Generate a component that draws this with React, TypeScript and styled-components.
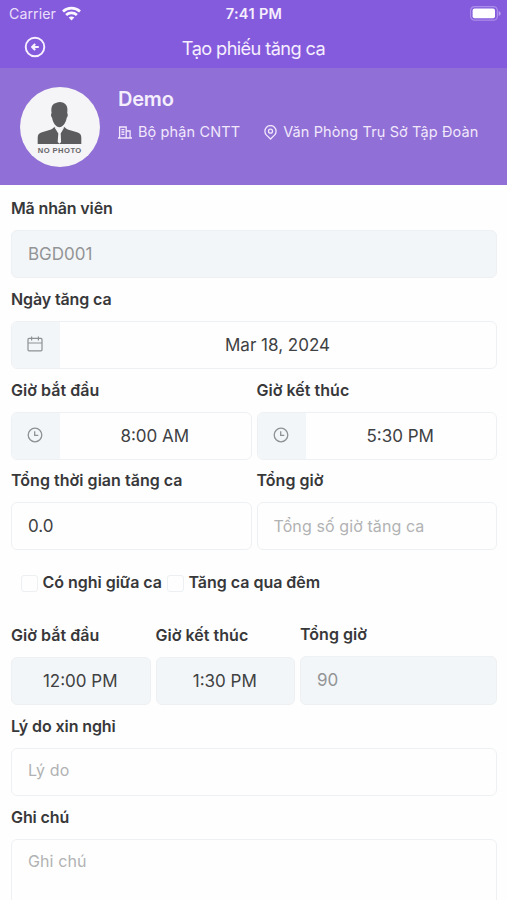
import React from "react";
import styled, { createGlobalStyle } from "styled-components";

const GlobalStyle = createGlobalStyle`
  * { box-sizing: border-box; }
  body {
    margin: 0;
    background: #fefefe;
    font-family: Inter, "Liberation Sans", sans-serif;
    color: #38383a;
  }
`;

const Screen = styled.div`
  width: 100%;
  height: 900px;
  overflow: hidden;
  display: flex;
  flex-direction: column;
`;

const Header = styled.header`
  height: 68px;
  flex: none;
  background: #855bdd;
  color: #f6effe;
`;

const StatusBar = styled.div`
  height: 27px;
  padding: 0 6px 0 9px;
  display: grid;
  grid-template-columns: 1fr auto 1fr;
  align-items: center;
  svg { display: block; }
`;

const Carrier = styled.div`
  display: flex;
  align-items: center;
  gap: 6px;
  font-size: 14.2px;
  line-height: 20px;
  letter-spacing: 0.05px;
  color: #eadffa;
`;

const Clock = styled.div`
  font-size: 14.5px;
  font-weight: 600;
  letter-spacing: 0.35px;
  margin-right: 2px;
`;

const BatterySlot = styled.div`
  display: flex;
  justify-content: flex-end;
`;

const NavBar = styled.div`
  height: 40px;
  padding: 0 24px;
  display: grid;
  grid-template-columns: 24px 1fr 24px;
  align-items: center;
  svg { display: block; }
`;

const Title = styled.h1`
  margin: 1px 0 0 0;
  font-size: 18.2px;
  font-weight: 400;
  letter-spacing: -0.6px;
  text-align: center;
  white-space: nowrap;
`;

const Profile = styled.section`
  height: 117px;
  flex: none;
  background: #906fd6;
  color: #f5effd;
  display: flex;
  padding: 19px 0 0 20px;
`;

const ProfileInfo = styled.div`
  padding-left: 18px;
`;

const Name = styled.div`
  font-size: 20px;
  line-height: 24px;
  font-weight: 600;
  letter-spacing: -0.2px;
`;

const MetaList = styled.div`
  margin-top: 11px;
  display: flex;
  gap: 24px;
`;

const Meta = styled.div`
  display: flex;
  align-items: center;
  gap: 6px;
  font-size: 14.5px;
  line-height: 20px;
  letter-spacing: 0.12px;
  white-space: nowrap;
  color: #f1e8fc;
`;

const Form = styled.main`
  flex: 1;
  min-height: 0;
  padding: 13px 10px 0 11px;
`;

const Row = styled.div<{ $columns?: string; $before?: number }>`
  display: grid;
  grid-template-columns: ${(p) => p.$columns ?? "1fr"};
  gap: 5px;
  align-items: end;
  margin-top: ${(p) => p.$before ?? 0}px;
`;

const Label = styled.div<{ $spacing?: number }>`
  height: 20px;
  line-height: 20px;
  margin-bottom: 12px;
  font-size: 16px;
  font-weight: 600;
  letter-spacing: ${(p) => p.$spacing ?? 0.03}px;
  white-space: nowrap;
`;

const Box = styled.div<{ $height?: number; $filled?: boolean }>`
  height: ${(p) => p.$height ?? 48}px;
  display: flex;
  overflow: hidden;
  border: 1px solid #eef1f3;
  border-radius: 6px;
  background: ${(p) => (p.$filled ? "#f3f6f8" : "#fefefe")};
`;

const Addon = styled.div`
  width: 48px;
  flex: none;
  display: flex;
  align-items: center;
  justify-content: center;
  padding: 0 2px 2px 0;
  background: #f3f6f8;
  color: #8e9193;
`;

const Value = styled.div<{ $center?: boolean; $tone?: "muted" | "hint"; $lift?: number }>`
  flex: 1;
  height: 46px;
  line-height: ${(p) => 47 - 2 * (p.$lift ?? 0)}px;
  padding: ${(p) => (p.$center ? "0 1px 0 0" : "0 16px")};
  text-align: ${(p) => (p.$center ? "center" : "left")};
  font-size: ${(p) => (p.$tone === "hint" ? 16 : 17)}px;
  letter-spacing: ${(p) => (p.$tone === "hint" ? 0.1 : 0)}px;
  color: ${(p) => (p.$tone === "hint" ? "#b1b2b3" : p.$tone === "muted" ? "#929496" : "#404143")};
  white-space: nowrap;
`;

const Checks = styled.div`
  display: flex;
  align-items: center;
  height: 20px;
  margin: 22px 0 0 10px;
`;

const Check = styled.div`
  display: flex;
  align-items: center;
  gap: 4.5px;
  margin-right: 5px;
  font-size: 16px;
  font-weight: 600;
  letter-spacing: -0.02px;
  white-space: nowrap;
`;

const Tick = styled.span`
  width: 17px;
  height: 17px;
  margin-top: 2px;
  border: 1px solid #edf0f2;
  border-radius: 3px;
`;

const WifiIcon = () => (
  <svg width="19" height="15" viewBox="0 0 19 15" fill="none" stroke="#fbf7ff" strokeWidth="2.7">
    <path d="M1 5.400C5.700.9 13.300.9 18 5.400" />
    <path d="M4.100 8.900c3-2.800 7.800-2.800 10.800 0" />
    <path d="M9.500 14.400 6.700 11.600c1.500-1.400 4.100-1.400 5.600 0z" fill="#fbf7ff" stroke="none" />
  </svg>
);

const BatteryIcon = () => (
  <svg width="31" height="15" viewBox="0 0 31 15">
    <rect x=".6" y=".6" width="26.8" height="13.600" rx="4" fill="none" stroke="#ab8ee9" strokeWidth="1.200" />
    <rect x="2.600" y="2.600" width="22.400" height="9.600" rx="2" fill="#fff" />
    <path d="M28.700 5v5c1.200-.5 2-1.400 2-2.500S29.900 5.500 28.700 5z" fill="#b79ded" />
  </svg>
);

const BackIcon = () => (
  <svg width="22" height="22" viewBox="0 0 22 22" fill="none" stroke="#f8f1ff" strokeWidth="1.900">
    <circle cx="11" cy="11" r="9.300" />
    <path d="M8.500 11h6.300M11.200 7.900 8.100 11l3.100 3.100" strokeWidth="2.100" strokeLinejoin="round" />
  </svg>
);

const Avatar = () => (
  <svg width="80" height="80" viewBox="0 0 80 80">
    <circle cx="40" cy="40" r="40" fill="#f5f4f6" />
    <g fill="#5c5b5d">
      <path d="M31.600 26c-1-6 1-9.500 5-10.200 2.500-1.800 7.600-.8 9.500 2.200 1.600 2.400 1.500 5.200 1.100 8 .9.700.8 3.700-.5 4.800-.8 5.400-4 9.400-7.300 9.400s-6.500-4-7.300-9.400c-1.300-1.100-1.400-4.100-.5-4.800z" />
      <path d="M17.700 57v-6.500c0-3 1.600-4.400 4.300-5.200l8.300-2.600c1.800-.6 3.200-1.500 4-2.900L39.400 45l5.100-5.200c.8 1.400 2.200 2.300 4 2.900l8.500 2.600c2.700.8 4.300 2.200 4.300 5.200V57z" />
    </g>
    <path d="m34.300 40 5.100 3.200 5.100-3.200-3.800 6.600.4 8.400-1.600 1.800-1.800-1.800.6-8.400z" fill="#f5f4f6" />
    <text x="39.500" y="65.500" textAnchor="middle" textLength="43.500" fontSize="7.600" fontWeight="700" fontFamily="Liberation Sans, Arial, sans-serif" fill="#68676a">NO PHOTO</text>
  </svg>
);

const BuildingIcon = () => (
  <svg width="14" height="13" viewBox="0 0 14 13" fill="none" stroke="currentColor" strokeWidth="1.300">
    <path d="M0 12h14M1.600 12V1h6.600v11M8.200 5h3.900v7M3.400 3.600h3M3.400 6h3M3.400 8.400h3" />
  </svg>
);

const PinIcon = () => (
  <svg width="13" height="15" viewBox="0 0 13 15" fill="none" stroke="currentColor" strokeWidth="1.300">
    <path d="M6.500 14 2.500 10.100a5.600 5.600 0 1 1 8 0z" />
    <circle cx="6.500" cy="6.200" r="2" />
  </svg>
);

const CalendarIcon = () => (
  <svg width="16" height="16" viewBox="0 0 16 16" fill="none" stroke="currentColor" strokeWidth="1.200">
    <rect x="1" y="2.400" width="14" height="12.400" rx="1" />
    <path d="M1 7h14M4.600.5v4M11.400.5v4" />
  </svg>
);

const ClockIcon = () => (
  <svg width="16" height="16" viewBox="0 0 16 16" fill="none" stroke="currentColor" strokeWidth="1.300">
    <circle cx="8" cy="8" r="6.800" />
    <path d="M7.700 4.200v4.100h3.600" />
  </svg>
);

type FieldProps = {
  label: string;
  value: string;
  icon?: React.ReactNode;
  center?: boolean;
  filled?: boolean;
  tone?: "muted" | "hint";
  height?: number;
  spacing?: number;
  lift?: number;
};

const Field = ({ label, value, icon, center, filled, tone, height, spacing, lift }: FieldProps) => (
  <div>
    <Label $spacing={spacing}>{label}</Label>
    <Box $height={height} $filled={filled}>
      {icon && <Addon>{icon}</Addon>}
      <Value $center={center} $tone={tone} $lift={lift}>{value}</Value>
    </Box>
  </div>
);

export default function App() {
  return (
    <Screen>
      <GlobalStyle />
      <Header>
        <StatusBar>
          <Carrier>Carrier <WifiIcon /></Carrier>
          <Clock>7:41 PM</Clock>
          <BatterySlot><BatteryIcon /></BatterySlot>
        </StatusBar>
        <NavBar>
          <BackIcon />
          <Title>Tạo phiếu tăng ca</Title>
        </NavBar>
      </Header>
      <Profile>
        <Avatar />
        <ProfileInfo>
          <Name>Demo</Name>
          <MetaList>
            <Meta><BuildingIcon />Bộ phận CNTT</Meta>
            <Meta><PinIcon />Văn Phòng Trụ Sở Tập Đoàn</Meta>
          </MetaList>
        </ProfileInfo>
      </Profile>
      <Form>
        <Row>
          <Field label="Mã nhân viên" value="BGD001" tone="muted" filled spacing={-0.15} />
        </Row>
        <Row $before={11}>
          <Field label="Ngày tăng ca" value="Mar 18, 2024" icon={<CalendarIcon />} center spacing={-0.12} />
        </Row>
        <Row $before={11} $columns="1fr 1fr">
          <Field label="Giờ bắt đầu" value="8:00 AM" icon={<ClockIcon />} center />
          <Field label="Giờ kết thúc" value="5:30 PM" icon={<ClockIcon />} center />
        </Row>
        <Row $before={10} $columns="1fr 1fr">
          <Field label="Tổng thời gian tăng ca" value="0.0" />
          <Field label="Tổng giờ" value="Tổng số giờ tăng ca" tone="hint" />
        </Row>
        <Checks>
          <Check><Tick />Có nghỉ giữa ca</Check>
          <Check><Tick />Tăng ca qua đêm</Check>
        </Checks>
        <Row $before={32} $columns="139.5px 139.5px 1fr">
          <Field label="Giờ bắt đầu" value="12:00 PM" center filled />
          <Field label="Giờ kết thúc" value="1:30 PM" center filled />
          <Field label="Tổng giờ" value="90" tone="muted" filled height={49} />
        </Row>
        <Row $before={11}>
          <Field label="Lý do xin nghỉ" value="Lý do" tone="hint" spacing={-0.1} lift={2} />
        </Row>
        <Row $before={11}>
          <Field label="Ghi chú" value="Ghi chú" tone="hint" height={110} spacing={-0.1} lift={2} />
        </Row>
      </Form>
    </Screen>
  );
}
